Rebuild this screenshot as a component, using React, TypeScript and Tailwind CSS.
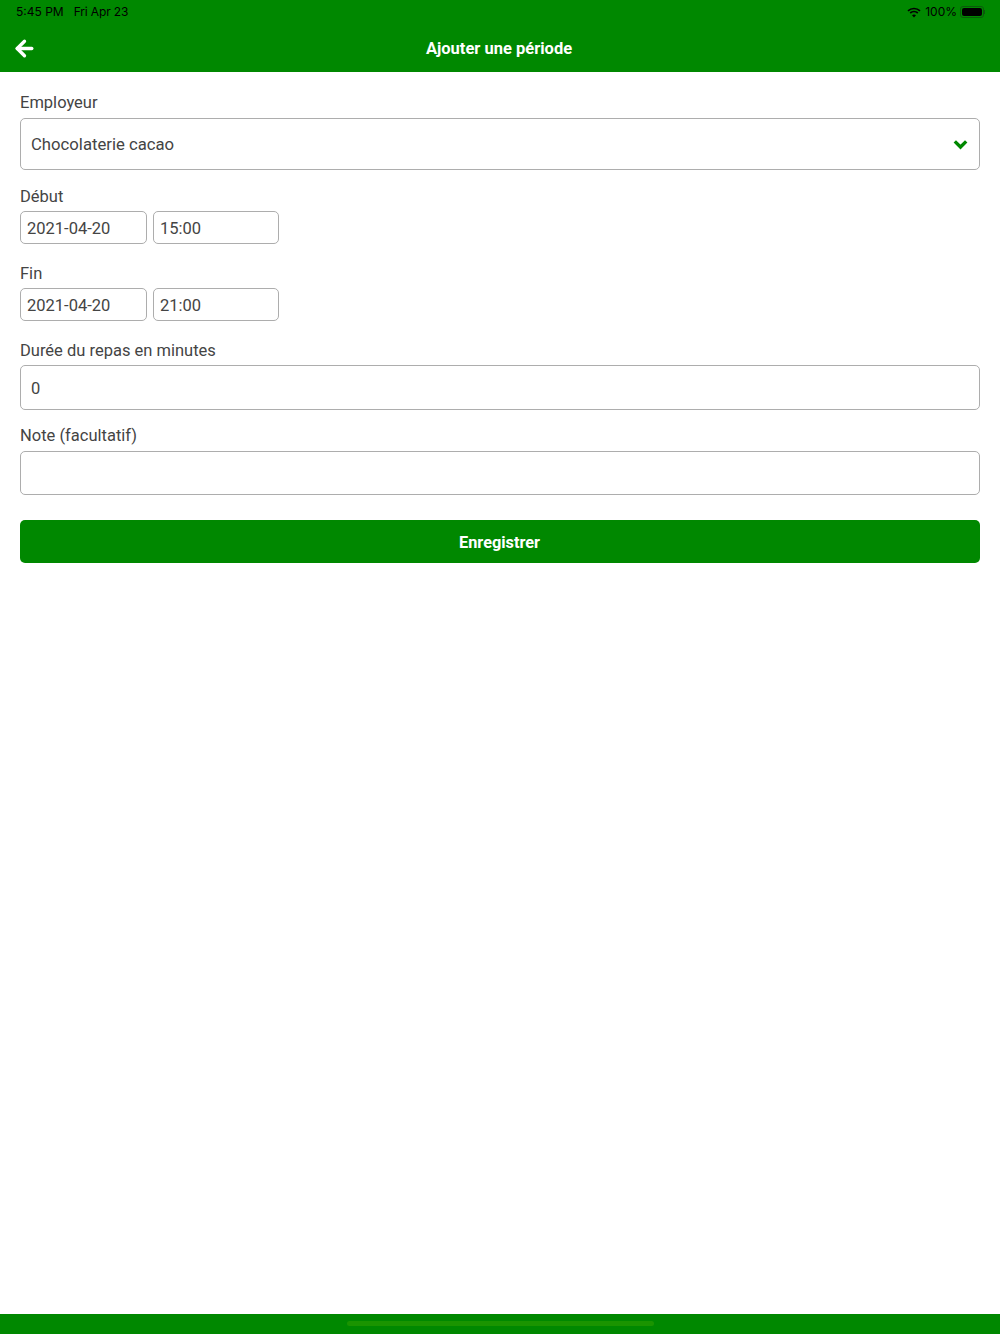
import { ArrowLeft } from 'lucide-react';

function Field({ value, className }: { value: string; className: string }) {
  return (
    <input
      readOnly
      value={value}
      className={`block border border-[#adadad] rounded-[5px] bg-white text-[#444444] text-[16.5px] pt-[2px] outline-none ${className}`}
    />
  );
}

function Label({ text, className }: { text: string; className: string }) {
  return <div className={`h-6 leading-[26px] text-[16.5px] text-[#444444] ${className}`}>{text}</div>;
}

function DateTimeRow({ date, time }: { date: string; time: string }) {
  return (
    <div className="flex gap-[6px]">
      <Field value={date} className="w-[127px] h-[33px] px-[6px]" />
      <Field value={time} className="w-[126px] h-[33px] px-[6px]" />
    </div>
  );
}

export default function App() {
  return (
    <div className="h-[1334px] flex flex-col bg-white font-['Roboto',sans-serif]">
      {/* Header with status bar */}
      <div className="h-[72px] bg-[#008800] shrink-0">
        <div className="h-6 flex items-center justify-between pl-4 pr-[15px] font-['Inter',sans-serif] text-[12px] text-black">
          <div className="flex items-center gap-[10px]">
            <span>5:45 PM</span>
            <span className="tracking-[-0.15px]">Fri Apr 23</span>
          </div>
          <div className="flex items-center gap-[4px]">
            <svg width="14" height="11" viewBox="0 0 14 11" fill="none" stroke="black" strokeWidth="1.7">
              <path d="M1 3.8C4.4.7 9.6.7 13 3.8" />
              <path d="M3.2 6C5.4 4 8.6 4 10.8 6" />
              <path d="M7 10.6 5 8.2c1.2-1 2.8-1 4 0z" fill="black" stroke="none" />
            </svg>
            <span>100%</span>
            <div className="flex items-center ml-[-1px]">
              <div className="w-[24px] h-[12px] rounded-[3px] border border-[#0b5a0b] p-[1px]">
                <div className="w-full h-full bg-black rounded-[2px]" />
              </div>
              <div className="w-[1px] h-[4px] bg-[#0b5a0b]" />
            </div>
          </div>
        </div>
        <div className="h-12 relative flex items-center justify-center">
          <ArrowLeft size={25} strokeWidth={3.2} className="absolute left-[12px] top-[12px] text-white" />
          <span className="text-white font-bold text-[16.5px] mr-[2px] mt-[2px]">Ajouter une période</span>
        </div>
      </div>

      {/* Form */}
      <div className="flex-1 px-5 pt-[18px]">
        <Label text="Employeur" className="mb-1" />
        <div className="h-[52px] border border-[#adadad] rounded-[5px] flex items-center justify-between pl-[10px] pr-[11px] text-[16.7px] text-[#444444]">
          <span className="pt-[1px]">Chocolaterie cacao</span>
          <svg width="15" height="11" viewBox="0 0 15 11" fill="none" stroke="#008800" strokeWidth="3.4">
            <path d="M1.8 2.4 7.5 8l5.7-5.6" />
          </svg>
        </div>

        <Label text="Début" className="mt-[14px] mb-[3px]" />
        <DateTimeRow date="2021-04-20" time="15:00" />

        <Label text="Fin" className="mt-[17px] mb-[3px]" />
        <DateTimeRow date="2021-04-20" time="21:00" />

        <Label text="Durée du repas en minutes" className="mt-[17px] mb-[3px]" />
        <Field value="0" className="w-full h-[45px] px-[10px]" />

        <Label text="Note (facultatif)" className="mt-[13px] mb-1" />
        <Field value="" className="w-full h-[44px] px-[10px]" />

        <button className="block w-full h-[43px] mt-[25px] rounded-[5px] bg-[#008800] text-white font-bold text-[16.3px] pt-[3px] pr-[1px]">
          Enregistrer
        </button>
      </div>

      {/* Home indicator */}
      <div className="h-5 bg-[#008800] shrink-0 flex justify-center pt-[7px]">
        <div className="w-[307px] h-[5px] rounded-full bg-[#1a9400]" />
      </div>
    </div>
  );
}
